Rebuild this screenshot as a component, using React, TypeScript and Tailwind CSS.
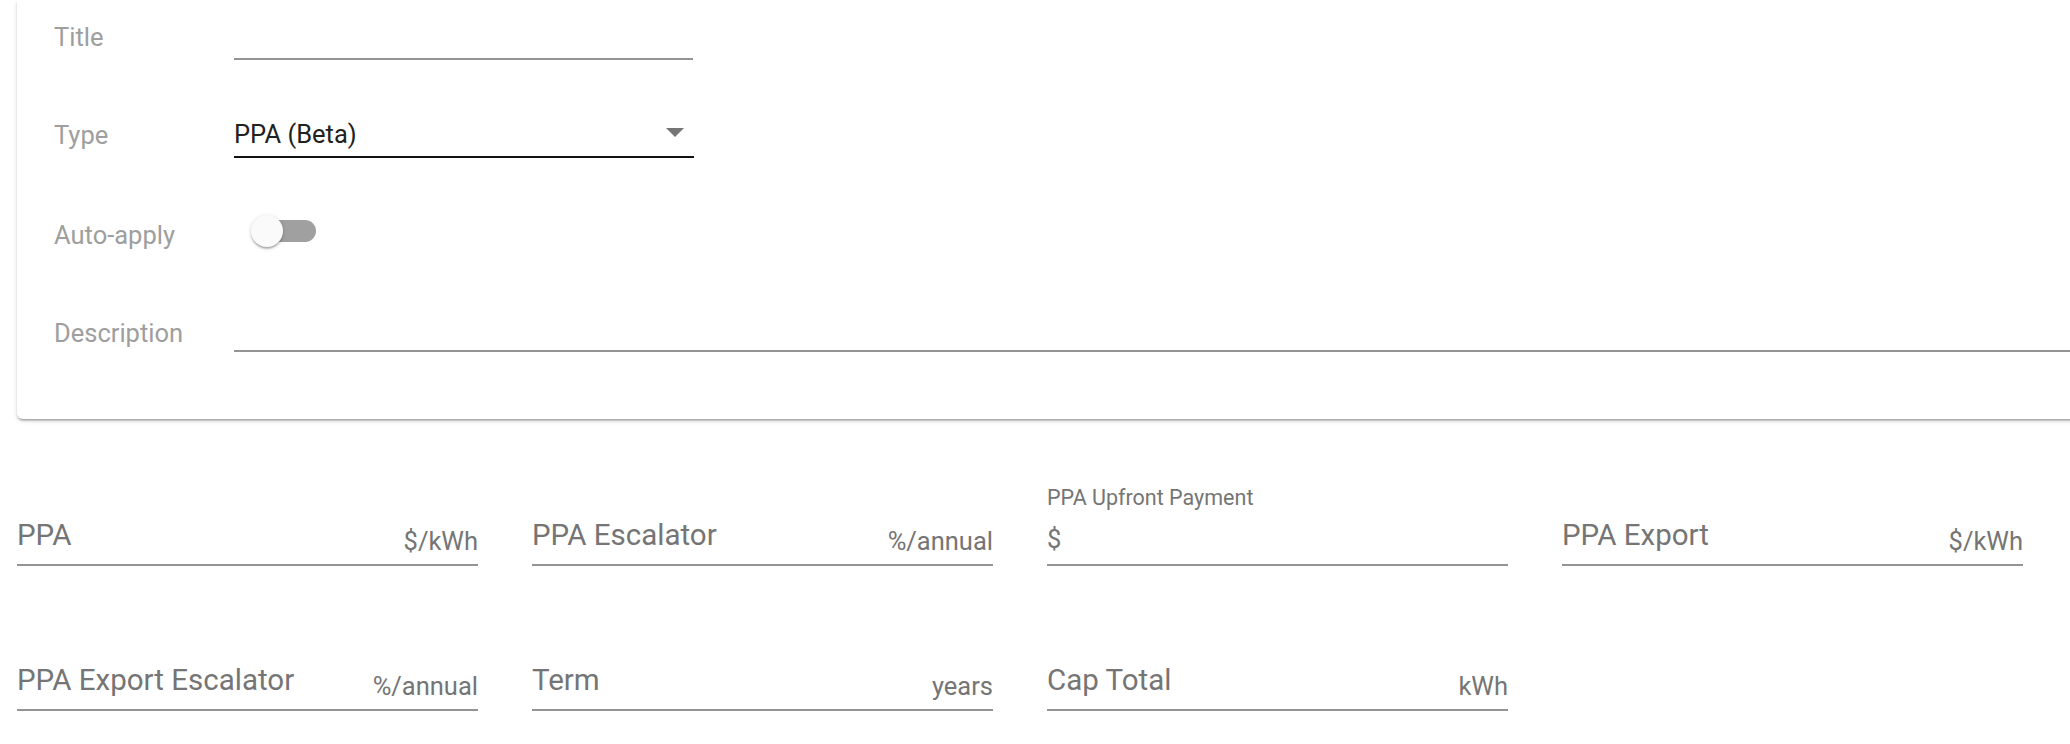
type Field = {
  label: string;
  unit?: string;
  prefix?: string;
};

const fields: Field[] = [
  { label: "PPA", unit: "$/kWh" },
  { label: "PPA Escalator", unit: "%/annual" },
  { label: "PPA Upfront Payment", prefix: "$" },
  { label: "PPA Export", unit: "$/kWh" },
  { label: "PPA Export Escalator", unit: "%/annual" },
  { label: "Term", unit: "years" },
  { label: "Cap Total", unit: "kWh" },
];

function RateField({ f }: { f: Field }) {
  // shrunk label + start adornment
  if (f.prefix) {
    return (
      <div className="flex flex-col h-[90px] border-b-2 border-[#949494]">
        <span className="mt-[11px] text-[21.5px] leading-[21.5px] text-[#757575]">{f.label}</span>
        <span className="mt-[18px] text-[25.5px] leading-[25.5px] text-[#757575]">{f.prefix}</span>
      </div>
    );
  }
  return (
    <div className="flex items-end justify-between h-[90px] border-b-2 border-[#949494]">
      <span className="mb-[14px] text-[29.5px] leading-[29.5px] text-[#757575]">{f.label}</span>
      <span className="mb-[10px] text-[25.5px] leading-[25.5px] text-[#757575]">{f.unit}</span>
    </div>
  );
}

export default function App() {
  return (
    <div className="w-full min-h-screen overflow-hidden bg-white font-['Roboto',sans-serif]">
      {/* Settings card */}
      <div className="ml-[17px] w-[2100px] h-[419px] pl-[37px] bg-white rounded-b-[6px] shadow-[0_3px_2px_-2px_rgba(0,0,0,0.2),0_2px_2px_0_rgba(0,0,0,0.14),0_2px_5px_0_rgba(0,0,0,0.12)]">
        {/* Title */}
        <div className="flex h-[60px]">
          <span className="w-[180px] mt-[25px] text-[25.5px] leading-[25.5px] text-[#9e9e9e]">Title</span>
          <div className="w-[459px] h-full border-b-2 border-[#949494]" />
        </div>

        {/* Type */}
        <div className="flex h-[98px]">
          <span className="w-[180px] mt-[63px] text-[25.5px] leading-[25.5px] text-[#9e9e9e]">Type</span>
          <div className="flex justify-between w-[460px] h-full border-b-2 border-[#111]">
            <span className="mt-[62px] text-[25.5px] leading-[25.5px] text-[#212121]">PPA (Beta)</span>
            <svg className="mt-[68px] mr-[10px]" width="18" height="9" viewBox="0 0 18 9">
              <polygon points="0,0 18,0 9,9" fill="#757575" />
            </svg>
          </div>
        </div>

        {/* Auto-apply */}
        <div className="flex h-[120px]">
          <span className="w-[180px] mt-[65px] text-[25.5px] leading-[25.5px] text-[#9e9e9e]">Auto-apply</span>
          <div className="relative flex items-center ml-[17px] mt-[57px] w-[65px] h-[32px]">
            <div className="ml-[5px] w-[60px] h-[22px] rounded-full bg-[#a0a0a0]" />
            <div className="absolute left-0 top-0 size-[32px] rounded-full bg-[#fafafa] shadow-[0_3px_2px_-1px_rgba(0,0,0,0.2),0_1px_2px_0_rgba(0,0,0,0.14),0_1px_5px_0_rgba(0,0,0,0.12)]" />
          </div>
        </div>

        {/* Description */}
        <div className="flex h-[74px]">
          <span className="w-[180px] mt-[43px] text-[25.5px] leading-[25.5px] text-[#9e9e9e]">Description</span>
          <div className="flex-1 h-full border-b-2 border-[#949494]" />
        </div>
      </div>

      {/* Rate fields */}
      <div className="grid grid-cols-4 w-[2006px] ml-[17px] mt-[57px] gap-x-[54px] gap-y-[55px]">
        {fields.map((f) => (
          <RateField key={f.label} f={f} />
        ))}
      </div>
    </div>
  );
}
